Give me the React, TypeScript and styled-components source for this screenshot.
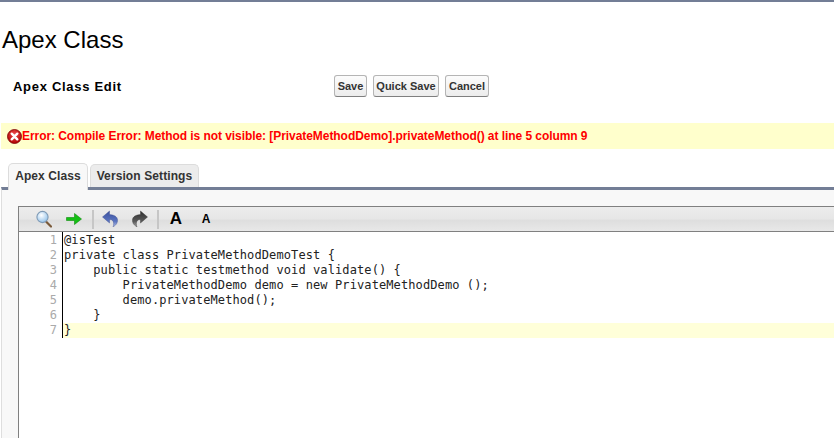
import React from "react";
import styled, { createGlobalStyle } from "styled-components";

const Global = createGlobalStyle`
  html, body { margin: 0; padding: 0; background: #fff; height: 100%; overflow: hidden; }
  body { font-family: "Liberation Sans", Arial, sans-serif; }
`;

const Page = styled.div`
  width: 834px;
  height: 438px;
  overflow: hidden;
  border-top: 2px solid #737e96;
  box-sizing: border-box;
  display: flex;
  flex-direction: column;
`;

const Title = styled.h1`
  margin: 24px 0 0 2px;
  font-size: 24px;
  line-height: 28px;
  font-weight: 400;
  color: #000;
`;

const EditHeader = styled.div`
  display: flex;
  align-items: center;
  height: 22px;
  margin-top: 21px;
  padding-left: 13px;
`;

const EditTitle = styled.h2`
  margin: 0;
  width: 321px;
  font-size: 13px;
  letter-spacing: 0.7px;
  font-weight: 700;
  color: #000;
`;

const ButtonRow = styled.div`
  display: flex;
  gap: 6px;
`;

const Button = styled.button<{ $w: number }>`
  width: ${(p) => p.$w}px;
  height: 22px;
  padding: 0;
  border: 1px solid #b5b5b5;
  border-bottom-color: #7f7f7f;
  border-radius: 3px;
  background: linear-gradient(#fcfcfc, #ececec);
  color: #333;
  font: 700 11px "Liberation Sans", Arial, sans-serif;
`;

const ErrorBar = styled.div`
  display: flex;
  align-items: center;
  height: 26px;
  margin: 26px 0 0 1px;
  padding-left: 6px;
  background: #ffffcc;
  color: #ff0000;
  font-size: 12px;
  font-weight: 700;
  letter-spacing: -0.06px;
  white-space: nowrap;
`;

const ErrorIcon = styled.svg`
  width: 15px;
  height: 15px;
  flex: none;
`;

const Tabs = styled.div`
  display: flex;
  align-items: flex-end;
  height: 24px;
  margin-top: 14px;
  padding-left: 8px;
  gap: 2px;
`;

const Tab = styled.div<{ $active?: boolean; $w: number }>`
  width: ${(p) => p.$w}px;
  height: ${(p) => (p.$active ? 27 : 23)}px;
  box-sizing: border-box;
  display: flex;
  align-items: center;
  justify-content: center;
  padding-bottom: ${(p) => (p.$active ? 3 : 0)}px;
  border: 1px solid #dcdcdc;
  border-bottom: none;
  border-radius: 5px 5px 0 0;
  background: ${(p) => (p.$active ? "#f8f8f8" : "#ececec")};
  color: #333;
  font-size: 12px;
  font-weight: 700;
  letter-spacing: 0.1px;
  position: relative;
  z-index: ${(p) => (p.$active ? 1 : 0)};
  margin-bottom: ${(p) => (p.$active ? -3 : 0)}px;
`;

const Panel = styled.div`
  flex: 1;
  min-height: 0;
  margin-left: 1px;
  border-top: 3px solid #737e96;
  border-left: 1px solid #dedede;
  background: #f8f8f8;
  padding: 16px 0 0 16px;
  display: flex;
`;

const Editor = styled.div`
  flex: 1;
  min-width: 0;
  border-left: 1px solid #808080;
  border-top: 1px solid #808080;
  background: #fff;
  display: flex;
  flex-direction: column;
`;

const Toolbar = styled.div`
  height: 24px;
  flex: none;
  border-bottom: 1px solid #808080;
  background: linear-gradient(#ececec 0%, #e6e6e6 50%, #dedede 55%, #e8e8e8 100%);
  display: flex;
  align-items: center;
  padding-left: 17px;
`;

const ToolIcon = styled.svg<{ $gap?: number }>`
  width: 16px;
  height: 18px;
  flex: none;
  margin-right: ${(p) => p.$gap ?? 14}px;
`;

const Separator = styled.span<{ $right: number }>`
  width: 2px;
  height: 19px;
  flex: none;
  background: #c6c6c6;
  margin-right: ${(p) => p.$right}px;
`;

const FontGlyph = styled.span<{ $size: number; $width: number; $left?: number }>`
  width: ${(p) => p.$width}px;
  flex: none;
  margin-left: ${(p) => p.$left ?? 0}px;
  text-align: center;
  font-family: "Liberation Sans", Arial, sans-serif;
  font-size: ${(p) => p.$size}px;
  font-weight: 700;
  color: #000;
  line-height: 16px;
`;

const CodeArea = styled.div`
  display: flex;
  align-items: stretch;
  font: 12px/15px "DejaVu Sans Mono", monospace;
`;

const Gutter = styled.div`
  width: 43px;
  flex: none;
  box-sizing: border-box;
  padding: 1px 5px 0 0;
  text-align: right;
  color: #aaa;
`;

const GutterLine = styled.div`
  height: 15px;
`;

const Code = styled.div`
  flex: 1;
  min-width: 0;
  padding-top: 1px;
  border-left: 1px solid #000;
`;

const CodeLine = styled.div<{ $hl?: boolean }>`
  height: 15px;
  padding-left: 1px;
  white-space: pre;
  letter-spacing: 0.1px;
  color: #222;
  background: ${(p) => (p.$hl ? "#ffffd9" : "transparent")};
`;

const lines = [
  "@isTest",
  "private class PrivateMethodDemoTest {",
  "    public static testmethod void validate() {",
  "        PrivateMethodDemo demo = new PrivateMethodDemo ();",
  "        demo.privateMethod();",
  "    }",
  "}",
];

export default function App() {
  return (
    <Page>
      <Global />
      <Title>Apex Class</Title>
      <EditHeader>
        <EditTitle>Apex Class Edit</EditTitle>
        <ButtonRow>
          <Button $w={33}>Save</Button>
          <Button $w={66}>Quick Save</Button>
          <Button $w={44}>Cancel</Button>
        </ButtonRow>
      </EditHeader>
      <ErrorBar>
        <ErrorIcon viewBox="0 0 15 15">
          <defs>
            <radialGradient id="err" cx="50%" cy="35%" r="65%">
              <stop offset="0" stopColor="#f05050" />
              <stop offset="1" stopColor="#b00000" />
            </radialGradient>
          </defs>
          <circle cx="7.5" cy="7.5" r="7" fill="url(#err)" stroke="#7a0000" strokeWidth="0.8" />
          <path d="M4.7 4.7l5.6 5.6M10.3 4.7l-5.6 5.6" stroke="#fff" strokeWidth="2.4" strokeLinecap="round" />
        </ErrorIcon>
        Error: Compile Error: Method is not visible: [PrivateMethodDemo].privateMethod() at line 5 column 9
      </ErrorBar>
      <Tabs>
        <Tab $active $w={80}>Apex Class</Tab>
        <Tab $w={109}>Version Settings</Tab>
      </Tabs>
      <Panel>
        <Editor>
          <Toolbar>
            <ToolIcon viewBox="0 0 16 18">
              <defs>
                <radialGradient id="lens" cx="40%" cy="35%" r="70%">
                  <stop offset="0" stopColor="#ffffff" />
                  <stop offset="1" stopColor="#8fc0ea" />
                </radialGradient>
              </defs>
              <path d="M10 11.5l5 5" stroke="#7a5a3a" strokeWidth="2.2" strokeLinecap="round" />
              <circle cx="6.5" cy="7" r="5.6" fill="url(#lens)" stroke="#7f9ab5" strokeWidth="1.1" />
            </ToolIcon>
            <ToolIcon viewBox="0 0 16 18" $gap={10}>
              <path d="M0.5 7.5h8V3.5L15.5 9l-7 5.5v-4h-8z" fill="#14c014" stroke="#0d8a0d" strokeWidth="0.6" />
            </ToolIcon>
            <Separator $right={8} />
            <ToolIcon viewBox="0 0 16 18">
              <defs>
                <linearGradient id="undo" x1="0" y1="0" x2="0" y2="1">
                  <stop offset="0" stopColor="#3a4f9c" />
                  <stop offset="0.65" stopColor="#5a74c0" />
                  <stop offset="1" stopColor="#b3c0e8" />
                </linearGradient>
                <linearGradient id="redo" x1="0" y1="0" x2="0" y2="1">
                  <stop offset="0" stopColor="#2e2e2e" />
                  <stop offset="0.65" stopColor="#5a5a5a" />
                  <stop offset="1" stopColor="#a8a8a8" />
                </linearGradient>
              </defs>
              <path d="M7.5 1L0.5 7l7 6V9.5c3 0 4.2 1.6 4.2 4.3 0 1-.2 2-.7 3 3.6-1.8 4.8-4.6 4.5-7.2C15.2 6.6 12 4.8 7.5 4.6z" fill="url(#undo)" stroke="#33458c" strokeWidth="0.4" />
            </ToolIcon>
            <ToolIcon viewBox="0 0 16 18" $gap={9}>
              <path d="M8.5 1l7 6-7 6V9.5c-3 0-4.2 1.6-4.2 4.3 0 1 .2 2 .7 3C1.4 15 .2 12.2.5 9.6.8 6.6 4 4.8 8.5 4.6z" fill="url(#redo)" stroke="#2a2a2a" strokeWidth="0.4" />
            </ToolIcon>
            <Separator $right={10} />
            <FontGlyph $size={17} $width={14}>A</FontGlyph>
            <FontGlyph $size={12} $width={10} $left={18}>A</FontGlyph>
          </Toolbar>
          <CodeArea>
            <Gutter>
              {lines.map((_, i) => (
                <GutterLine key={i}>{i + 1}</GutterLine>
              ))}
            </Gutter>
            <Code>
              {lines.map((l, i) => (
                <CodeLine key={i} $hl={i === 6}>{l}</CodeLine>
              ))}
            </Code>
          </CodeArea>
        </Editor>
      </Panel>
    </Page>
  );
}
